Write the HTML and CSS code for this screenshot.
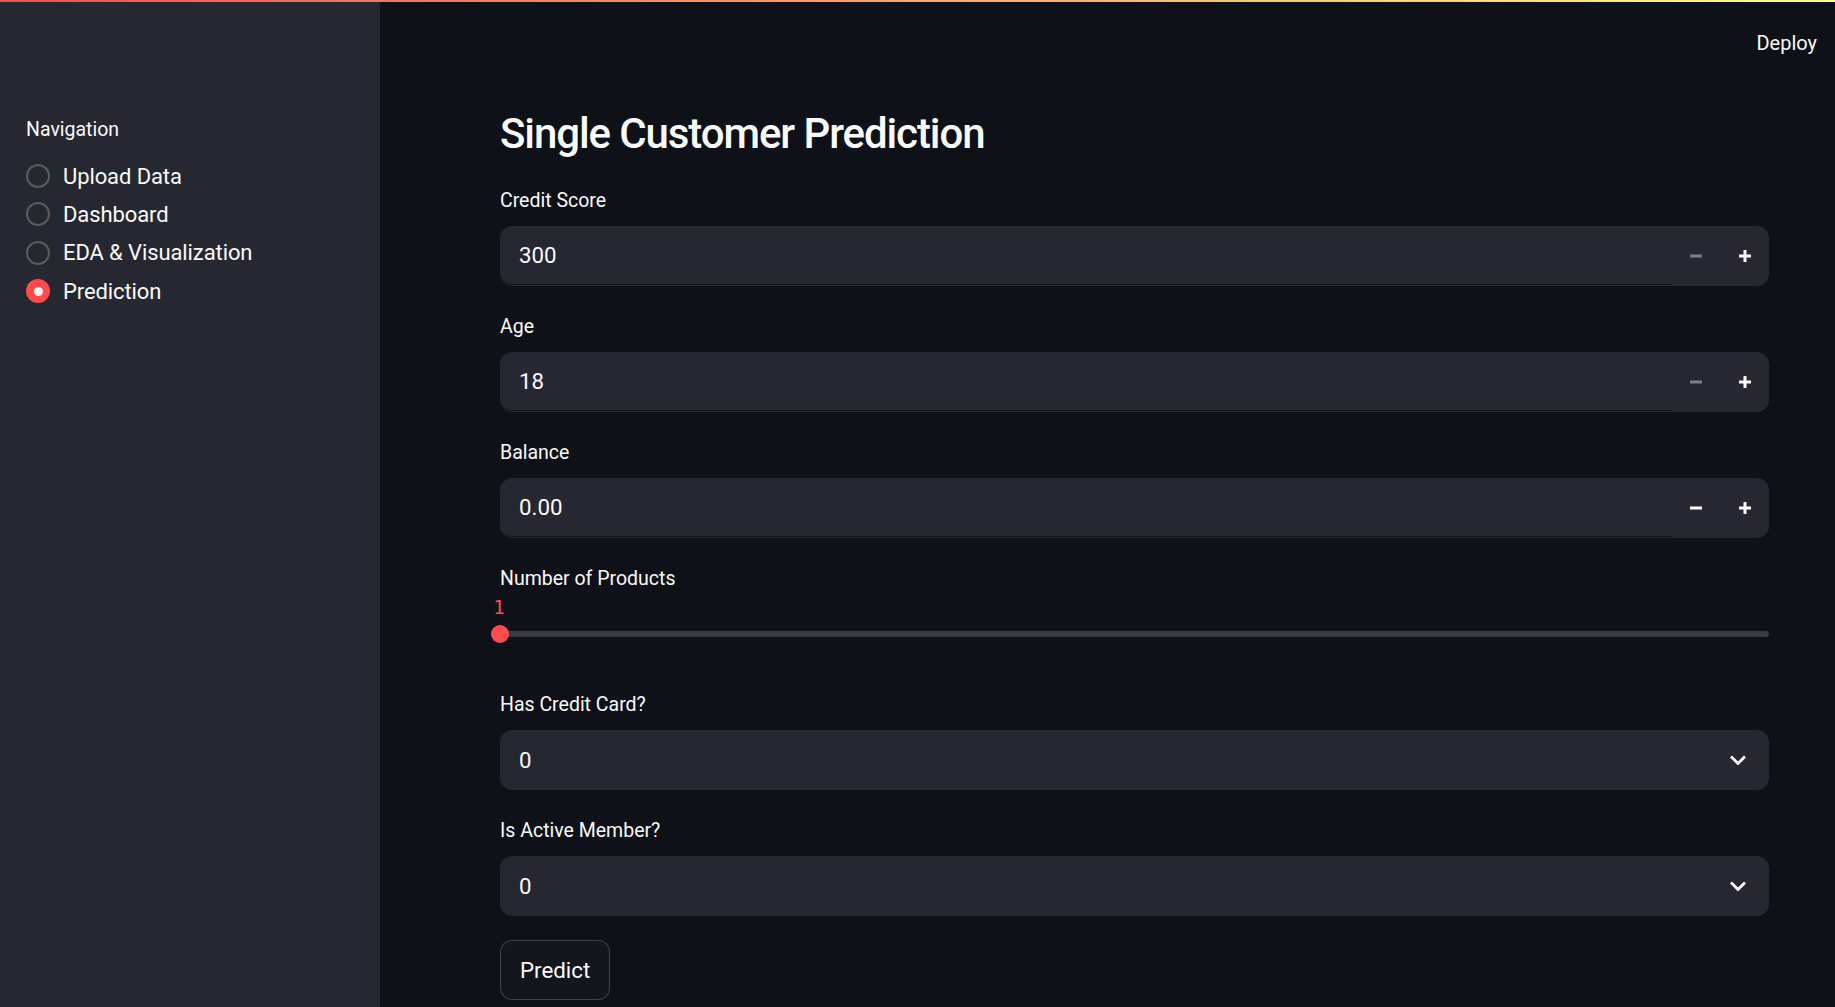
FILE: index.html
```html
<!DOCTYPE html>
<html lang="en">
<head>
<meta charset="utf-8">
<title>Single Customer Prediction</title>
<link rel="stylesheet" href="styles.css">
</head>
<body>
<div class="app">
  <div class="decoration"></div>
  <aside class="sidebar">
    <div class="nav-label">Navigation</div>
    <div class="radio-group">
      <div class="radio-row"><span class="radio"></span><span class="radio-text">Upload Data</span></div>
      <div class="radio-row"><span class="radio"></span><span class="radio-text">Dashboard</span></div>
      <div class="radio-row"><span class="radio"></span><span class="radio-text">EDA &amp; Visualization</span></div>
      <div class="radio-row"><span class="radio checked"></span><span class="radio-text">Prediction</span></div>
    </div>
  </aside>
  <main class="main">
    <header class="header"><span class="deploy">Deploy</span></header>
    <div class="block">
      <h2 class="title">Single Customer Prediction</h2>

      <div class="field">
        <div class="label">Credit Score</div>
        <div class="num-input">
          <div class="num-text">300</div>
          <div class="step disabled"><svg width="12" height="12" viewBox="0 0 12 12"><path d="M0 6h12" stroke="currentColor" stroke-width="3"/></svg></div>
          <div class="step"><svg width="12" height="12" viewBox="0 0 12 12"><path d="M6 0v12M0 6h12" stroke="currentColor" stroke-width="3"/></svg></div>
        </div>
      </div>

      <div class="field">
        <div class="label">Age</div>
        <div class="num-input">
          <div class="num-text">18</div>
          <div class="step disabled"><svg width="12" height="12" viewBox="0 0 12 12"><path d="M0 6h12" stroke="currentColor" stroke-width="3"/></svg></div>
          <div class="step"><svg width="12" height="12" viewBox="0 0 12 12"><path d="M6 0v12M0 6h12" stroke="currentColor" stroke-width="3"/></svg></div>
        </div>
      </div>

      <div class="field">
        <div class="label">Balance</div>
        <div class="num-input">
          <div class="num-text">0.00</div>
          <div class="step"><svg width="12" height="12" viewBox="0 0 12 12"><path d="M0 6h12" stroke="currentColor" stroke-width="3"/></svg></div>
          <div class="step"><svg width="12" height="12" viewBox="0 0 12 12"><path d="M6 0v12M0 6h12" stroke="currentColor" stroke-width="3"/></svg></div>
        </div>
      </div>

      <div class="field">
        <div class="label">Number of Products</div>
        <div class="slider">
          <div class="track"></div>
          <div class="thumb"></div>
          <div class="thumb-value">1</div>
        </div>
      </div>

      <div class="field">
        <div class="label">Has Credit Card?</div>
        <div class="select">
          <span class="select-text">0</span>
          <svg class="chevron" width="16" height="10" viewBox="0 0 16 10"><path d="M1 1.5l7 7 7-7" fill="none" stroke="currentColor" stroke-width="2.8"/></svg>
        </div>
      </div>

      <div class="field">
        <div class="label">Is Active Member?</div>
        <div class="select">
          <span class="select-text">0</span>
          <svg class="chevron" width="16" height="10" viewBox="0 0 16 10"><path d="M1 1.5l7 7 7-7" fill="none" stroke="currentColor" stroke-width="2.8"/></svg>
        </div>
      </div>

      <div class="btn-row"><button class="btn">Predict</button></div>
    </div>
  </main>
</div>
</body>
</html>
```

FILE: styles.css
```css
* { box-sizing: border-box; }
html, body { margin: 0; padding: 0; }
body {
  background: #0e1117;
  color: #fafafa;
  font-family: Roboto, "Liberation Sans", sans-serif;
  font-size: 22.3px;
  overflow: hidden;
}
.app {
  display: flex;
  height: 100vh;
  position: relative;
  overflow: hidden;
}
.decoration {
  position: absolute;
  top: 0; left: 0; right: 0;
  height: 2px;
  background: linear-gradient(90deg, #ff4b4b, #fffd80);
  z-index: 5;
}
.sidebar {
  width: 380px;
  flex-shrink: 0;
  background: #262730;
  padding: 112px 20px 0 26px;
}
.nav-label {
  height: 36px;
  line-height: 36px;
  font-size: 19.5px;
  margin-bottom: 9px;
}
.radio-group { display: flex; flex-direction: column; }
.radio-row {
  height: 38.3px;
  display: flex;
  align-items: center;
  gap: 13px;
}
.radio {
  width: 24px; height: 24px;
  border-radius: 50%;
  border: 2px solid #5b5c63;
  flex-shrink: 0;
  display: flex; align-items: center; justify-content: center;
}
.radio.checked {
  background: #ff4b4b;
  border-color: #ff4b4b;
}
.radio.checked::after {
  content: "";
  width: 9px; height: 9px;
  border-radius: 50%;
  background: #f3f4f8;
}
.radio-text { font-size: 22px; letter-spacing: -0.1px; }

.main {
  flex: 1;
  display: flex;
  flex-direction: column;
  min-width: 0;
}
.header {
  height: 86px;
  display: flex;
  align-items: center;
  justify-content: flex-end;
  padding-right: 18px;
}
.deploy { font-size: 20px; }
.block {
  padding: 18px 66px 0 120px;
  display: flex;
  flex-direction: column;
  gap: 24px;
}
.title {
  margin: 0 0 -4px 0;
  font-size: 42px;
  line-height: 60px;
  font-weight: 500;
  letter-spacing: -1.1px;
}
.field { display: flex; flex-direction: column; }
.label {
  height: 36px;
  line-height: 33px;
  margin-bottom: 6px;
  font-size: 19.5px;
}
.num-input {
  height: 60px;
  background: #262730;
  border-radius: 12px;
  display: flex;
  align-items: stretch;
}
.num-text {
  flex: 1;
  display: flex;
  align-items: center;
  padding-left: 19px;
  border-bottom: 1px solid #14161c;
  border-bottom-left-radius: 12px;
  margin-bottom: 1px;
}
.step {
  width: 48px;
  display: flex;
  align-items: center;
  justify-content: center;
  color: #fafafa;
}
.step:last-child { width: 49px; }
.step.disabled { color: #7e808a; }
.slider {
  position: relative;
  height: 60px;
}
.track {
  position: absolute;
  left: 0; right: 0; top: 27px;
  height: 6px;
  border-radius: 3px;
  background: #393b43;
}
.thumb {
  position: absolute;
  left: -9px; top: 21px;
  width: 18px; height: 18px;
  border-radius: 50%;
  background: #ff4b4b;
}
.thumb-value {
  position: absolute;
  left: -9px; top: -8px;
  width: 16px;
  text-align: center;
  font-family: "DejaVu Sans Mono", "Liberation Mono", monospace;
  font-size: 19px;
  line-height: 22px;
  color: #ff4b4b;
}
.select {
  height: 60px;
  background: #262730;
  border-radius: 12px;
  display: flex;
  align-items: center;
  justify-content: space-between;
  padding: 0 23px 0 19px;
}
.chevron { color: #fafafa; }
.btn-row { display: flex; }
.btn {
  height: 60px;
  padding: 0 19px;
  background: #13161d;
  border: 1px solid rgba(250, 250, 250, 0.2);
  border-radius: 12px;
  color: #fafafa;
  font-family: inherit;
  font-size: 22.3px;
}
```
